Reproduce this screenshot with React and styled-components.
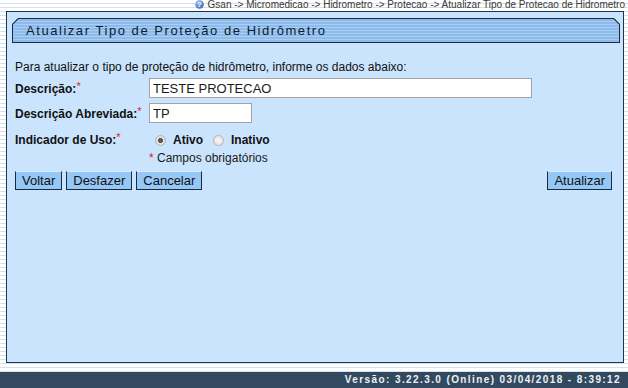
import styled, { createGlobalStyle } from "styled-components";

const GlobalStyle = createGlobalStyle`
  html, body {
    margin: 0;
    padding: 0;
  }
  body {
    width: 628px;
    height: 388px;
    overflow: hidden;
    font-family: "Liberation Sans", Arial, sans-serif;
    background: repeating-linear-gradient(
      to bottom,
      #ffffff 0 3px,
      #d2e1eb 3px 4px
    );
  }
`;

const Page = styled.div`
  display: flex;
  flex-direction: column;
  height: 388px;
`;

// Breadcrumb
const Breadcrumb = styled.div`
  height: 11px;
  display: flex;
  justify-content: flex-end;
  align-items: flex-start;
  gap: 4px;
  padding-right: 3px;
  font-size: 10px;
  line-height: 10px;
  color: #3a3a3a;
  white-space: nowrap;
`;

const HelpIcon = () => (
  <svg width="9" height="9" viewBox="0 0 10 10">
    <defs>
      <radialGradient id="hg" cx="0.35" cy="0.3" r="0.8">
        <stop offset="0" stopColor="#9cc3f2" />
        <stop offset="1" stopColor="#2f63b8" />
      </radialGradient>
    </defs>
    <circle cx="5" cy="5" r="4.8" fill="url(#hg)" />
    <text
      x="5"
      y="8"
      textAnchor="middle"
      fontSize="8"
      fontWeight="bold"
      fill="#fff"
      fontFamily="Liberation Sans, Arial, sans-serif"
    >
      ?
    </text>
  </svg>
);

// Main panel
const Main = styled.div`
  flex: 1;
  display: flex;
  padding: 0 4px 9px 6px;
`;

const Panel = styled.div`
  flex: 1;
  display: flex;
  flex-direction: column;
  background: #cbe4fd;
  border: 1px solid #22344a;
  padding: 6px 3px 0 5px;
`;

const TitleFrame = styled.div`
  height: 25px;
  padding: 1px;
  box-sizing: border-box;
  background: #1c2a3b;
  clip-path: polygon(6px 0, calc(100% - 6px) 0, 100% 6px, 100% 100%, 0 100%, 0 6px);
`;

const TitleBar = styled.div`
  height: 100%;
  display: flex;
  align-items: center;
  padding-left: 13px;
  background: repeating-linear-gradient(
    to bottom,
    #8dbbec 0 2px,
    #a9cdf3 2px 3px
  );
  clip-path: polygon(5.6px 0, calc(100% - 5.6px) 0, 100% 5.6px, 100% 100%, 0 100%, 0 5.6px);
  font-size: 13px;
  letter-spacing: 1.55px;
  color: #0e1c2e;
`;

const Content = styled.div`
  display: flex;
  flex-direction: column;
  padding: 17px 8px 0 3px;
  font-size: 12px;
  color: #111;
`;

const Intro = styled.div`
  line-height: 14px;
`;

const Row = styled.div`
  display: flex;
  align-items: center;
  height: 20px;
  margin-top: ${(p) => p.$top || 0}px;
`;

const Label = styled.div`
  width: 134px;
  flex-shrink: 0;
  font-weight: bold;
  white-space: nowrap;
`;

const Req = styled.span`
  color: #e0201c;
  font-weight: normal;
  font-size: 11px;
  vertical-align: 3px;
`;

const TextInput = styled.input`
  box-sizing: border-box;
  width: ${(p) => p.$width}px;
  height: 20px;
  border: 1px solid #a3a3a3;
  background: #fff;
  padding: 0 3px;
  margin: 0;
  font-family: "Liberation Sans", Arial, sans-serif;
  font-size: 13px;
  color: #1a1a1a;
  outline: none;
`;

const RadioGroup = styled.div`
  display: flex;
  align-items: center;
  padding-left: 6px;
  padding-top: 2px;
`;

const Radio = styled.input.attrs({ type: "radio" })`
  appearance: none;
  width: 11px;
  height: 11px;
  margin: 0 7px 0 0;
  border: 1px solid #b4b4b4;
  border-radius: 50%;
  background: radial-gradient(circle at 50% 50%, #f8f8f8 0, #dcdcdc 100%);

  &:checked {
    background: radial-gradient(circle, #5a5a5a 0 2.3px, #e6e6e6 2.8px, #d4d4d4 100%);
  }
`;

const RadioText = styled.span`
  font-weight: bold;
  margin-right: ${(p) => p.$gap || 0}px;
`;

const Hint = styled.div`
  margin: 2px 0 0 134px;
  line-height: 14px;
  color: #1a1a1a;

  span {
    color: #e0201c;
  }
`;

const Buttons = styled.div`
  display: flex;
  gap: 4px;
  margin-top: 6px;
`;

const Button = styled.button`
  height: 19px;
  box-sizing: border-box;
  padding: 0 6px;
  margin: 0;
  margin-left: ${(p) => (p.$right ? "auto" : "0")};
  font-family: "Liberation Sans", Arial, sans-serif;
  font-size: 13px;
  line-height: 17px;
  color: #111;
  background: #95c7f7;
  border: 1px solid;
  border-color: #d6eaff #1d2a3a #1d2a3a #1d2a3a;
  cursor: pointer;
`;

// Footer
const Footer = styled.div`
  height: 16px;
  background: #33495f;
  color: #edf2f7;
  font-size: 10px;
  font-weight: bold;
  letter-spacing: 1.4px;
  line-height: 16px;
  text-align: right;
  padding-right: 7px;
  white-space: nowrap;
`;

const App = () => {
  return (
    <>
      <GlobalStyle />
      <Page>
        <Breadcrumb>
          <HelpIcon />
          <span>
            Gsan -&gt; Micromedicao -&gt; Hidrometro -&gt; Protecao -&gt; Atualizar
            Tipo de Protecao de Hidrometro
          </span>
        </Breadcrumb>
        <Main>
          <Panel>
            <TitleFrame>
              <TitleBar>Atualizar Tipo de Proteção de Hidrômetro</TitleBar>
            </TitleFrame>
            <Content>
              <Intro>
                Para atualizar o tipo de proteção de hidrômetro, informe os dados
                abaixo:
              </Intro>
              <Row $top={4}>
                <Label>
                  Descrição:<Req>*</Req>
                </Label>
                <TextInput $width={383} defaultValue="TESTE PROTECAO" />
              </Row>
              <Row $top={5}>
                <Label>
                  Descrição Abreviada:<Req>*</Req>
                </Label>
                <TextInput $width={103} defaultValue="TP" />
              </Row>
              <Row $top={6}>
                <Label>
                  Indicador de Uso:<Req>*</Req>
                </Label>
                <RadioGroup>
                  <Radio name="uso" defaultChecked />
                  <RadioText $gap={10}>Ativo</RadioText>
                  <Radio name="uso" />
                  <RadioText>Inativo</RadioText>
                </RadioGroup>
              </Row>
              <Hint>
                <span>*</span> Campos obrigatórios
              </Hint>
              <Buttons>
                <Button>Voltar</Button>
                <Button>Desfazer</Button>
                <Button>Cancelar</Button>
                <Button $right>Atualizar</Button>
              </Buttons>
            </Content>
          </Panel>
        </Main>
        <Footer>Versão: 3.22.3.0 (Online) 03/04/2018 - 8:39:12</Footer>
      </Page>
    </>
  );
};

export default App;
